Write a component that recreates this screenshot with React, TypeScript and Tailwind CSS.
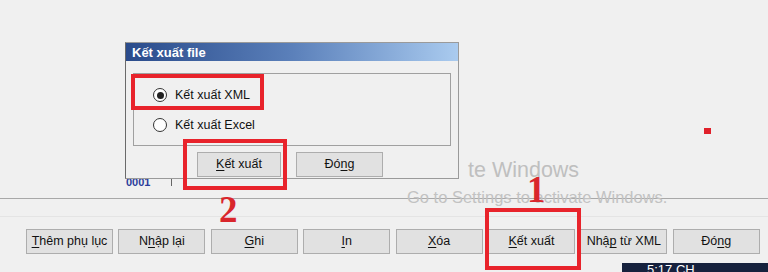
import type { ReactNode } from 'react';

const Mn = ({ children }: { children: ReactNode }) => <span className="underline underline-offset-2">{children}</span>;

const WinButton = ({ children, className = '' }: { children: ReactNode; className?: string }) => (
  <button className={`h-[25px] flex items-center justify-center bg-[#e1e1e1] border border-[#adadad] text-[12.5px] text-[#111] leading-none ${className}`}>
    <span className="whitespace-pre">{children}</span>
  </button>
);

const Radio = ({ checked, label }: { checked?: boolean; label: string }) => (
  <label className="flex items-center gap-[8px] h-[16px]">
    <span className="w-[14px] h-[14px] rounded-full border border-[#333] bg-white flex items-center justify-center">
      {checked && <span className="w-[7px] h-[7px] rounded-full bg-[#222]" />}
    </span>
    <span className="text-[12.5px] text-[#111] leading-none">{label}</span>
  </label>
);

const ExportDialog = () => (
  <div className="absolute left-[125px] top-[42px] w-[334px] h-[137px] bg-[#f0f0f0] border border-[#9a9a9a] border-l-[#6a6a6a]">
    <div className="h-[18px] flex items-center pl-[6px] bg-gradient-to-r from-[#2a4b8b] via-[#5b80ba] to-[#aacbef]">
      <span className="text-white text-[13px] font-bold leading-none">Kết xuất file</span>
    </div>
    <div className="px-[7px] pt-[12px]">
      <div className="h-[73px] border border-[#a0a0a0] pl-[19px] pt-[13px] flex flex-col gap-[14px]">
        <Radio checked label="Kết xuất XML" />
        <Radio label="Kết xuất Excel" />
      </div>
      <div className="flex gap-[15px] pl-[64px] mt-[6px]">
        <WinButton className="w-[84px]"><Mn>K</Mn>ết xuất</WinButton>
        <WinButton className="w-[87px]">Đó<Mn>n</Mn>g</WinButton>
      </div>
    </div>
  </div>
);

export default function App() {
  return (
    <div className="relative w-[768px] h-[272px] overflow-hidden bg-[#f0f0f0] flex flex-col" style={{ fontFamily: '"Liberation Sans", Arial, sans-serif' }}>
      <div className="relative h-[199px] border-b border-[#a8a8a8]">
        <div className="pt-[177px] pl-[126px] flex items-start">
          <span className="text-[11px] font-bold text-[#2b3e9c] leading-none">0001</span>
          <span className="ml-[21px] w-px h-[9px] bg-[#666]" />
        </div>
        <ExportDialog />
      </div>

      <div className="h-[18px] border-b border-[#e4e4e4]" />

      <div className="pt-[12px] pl-[26px] flex gap-[5.4px]">
        <WinButton className="w-[87px]"><Mn>T</Mn>hêm phụ lục</WinButton>
        <WinButton className="w-[87px]">N<Mn>h</Mn>ập lại</WinButton>
        <WinButton className="w-[87px]"><Mn>G</Mn>hi</WinButton>
        <WinButton className="w-[87px]"><Mn>I</Mn>n</WinButton>
        <WinButton className="w-[87px]"><Mn>X</Mn>óa</WinButton>
        <WinButton className="w-[87px]"><Mn>K</Mn>ết xuất</WinButton>
        <WinButton className="w-[87px]">Nhậ<Mn>p</Mn> từ XML</WinButton>
        <WinButton className="w-[87px]">Đó<Mn>n</Mn>g</WinButton>
      </div>

      <div className="mt-[9px] flex justify-end">
        <div className="w-[146px] h-[9px] bg-[#16213d] overflow-hidden pl-[25px]">
          <span className="block text-white text-[13px] leading-none">5:17 CH</span>
        </div>
      </div>

      {/* Windows activation watermark */}
      <span className="absolute left-[468px] top-[160px] text-[21.5px] leading-none text-[#bfbfbf] whitespace-nowrap">te Windows</span>
      <span className="absolute left-[407px] top-[189px] text-[16.5px] leading-none text-[#c2c2c2] whitespace-nowrap">Go to Settings to activate Windows.</span>

      {/* annotations */}
      <div className="absolute left-[131px] top-[74px] w-[133px] h-[36px] border-4 border-[#e8232b]" />
      <div className="absolute left-[183px] top-[139px] w-[104px] h-[51px] border-4 border-[#e8232b]" />
      <div className="absolute left-[485px] top-[208px] w-[96px] h-[62px] border-4 border-[#e8232b]" />
      <span className="absolute left-[219px] top-[191px] text-[37px] font-bold leading-none text-[#d9262c]" style={{ fontFamily: '"Liberation Serif", serif' }}>2</span>
      <span className="absolute left-[527px] top-[171px] text-[37px] font-bold leading-none text-[#d9262c]" style={{ fontFamily: '"Liberation Serif", serif' }}>1</span>
      <div className="absolute left-[704px] top-[128px] w-[7px] h-[6px] bg-[#e0202a]" />
    </div>
  );
}
